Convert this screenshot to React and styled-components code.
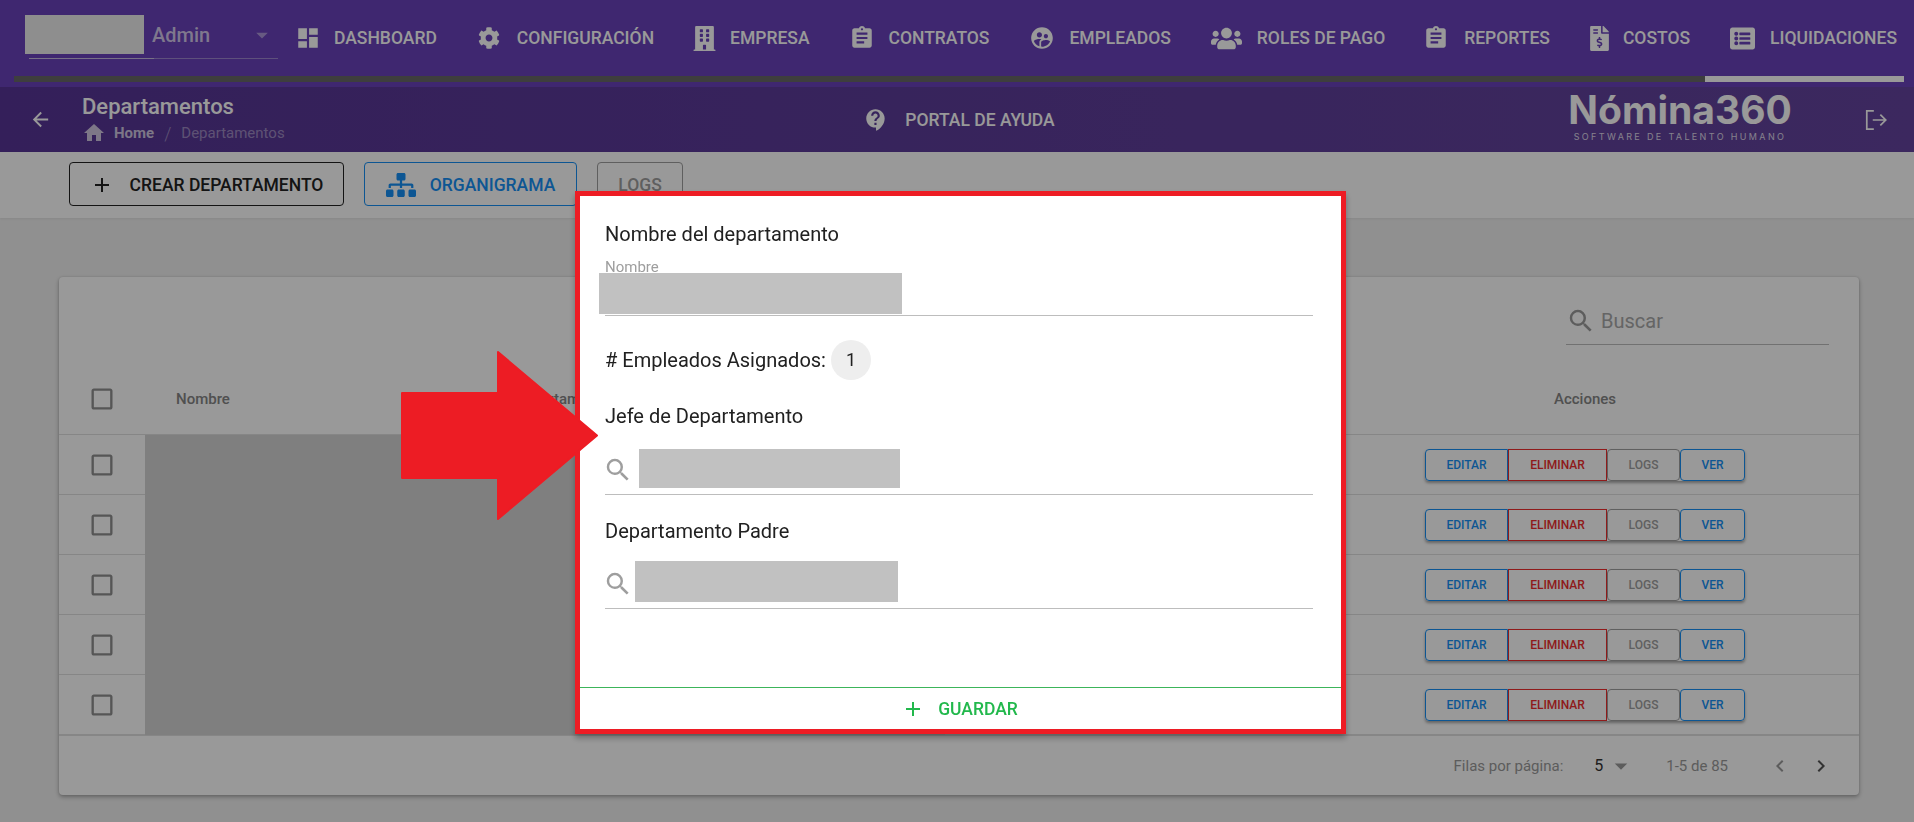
import React from 'react';
import styled, { createGlobalStyle } from 'styled-components';
import {
  MdDashboard, MdSupervisedUserCircle, MdContactSupport, MdHome, MdArrowBack, MdAdd, MdAssignment,
  MdSearch, MdCheckBoxOutlineBlank, MdChevronLeft, MdChevronRight, MdArrowDropDown,
} from 'react-icons/md';
import { FaCog, FaBuilding, FaUsers, FaFileInvoiceDollar, FaListAlt, FaSitemap } from 'react-icons/fa';

const GlobalStyle = createGlobalStyle`
  html, body { margin: 0; padding: 0; height: 100%; overflow: hidden; }
  body { background: #f0f0f0; font-family: Roboto, "Liberation Sans", sans-serif; }
  * { box-sizing: border-box; }
`;

const Page = styled.div`
  width: 1914px;
  height: 822px;
`;

const TopBar = styled.div`
  height: 87px;
  background: #6941bb;
  padding-top: 15px;
`;
const TopRow = styled.div`
  display: flex;
  height: 61px;
  padding-left: 25px;
`;
const UserBox = styled.div`
  flex: none;
  width: 253px;
  margin-right: 17px;
`;
const UserSelect = styled.div`
  display: flex;
  align-items: center;
  height: 39px;
  color: rgba(255, 255, 255, 0.72);
  font-size: 20px;
  font-weight: 500;
`;
const Avatar = styled.div`
  width: 119px;
  height: 39px;
  background: #ededed;
  margin-right: 8px;
`;
const Caret = styled(MdArrowDropDown)`
  margin-left: auto;
  margin-right: 2px;
  font-size: 28px;
  color: rgba(255, 255, 255, 0.45);
`;
const UserLine = styled.div`
  height: 1px;
  margin: 4px 0 0 4px;
  background: linear-gradient(90deg, #c9bddf 50%, #9d86cf 50%);
`;
const NavItem = styled.div`
  display: flex;
  align-items: center;
  flex: none;
  height: 46px;
  margin-right: ${p => p.$gap}px;
  color: #fff;
  font-size: 17.5px;
  font-weight: 500;
  white-space: nowrap;
  svg { font-size: ${p => p.$size}px; margin-right: ${p => p.$iconGap}px; }
`;
const ScrollTrack = styled.div`
  display: flex;
  justify-content: flex-end;
  height: 6px;
  margin: 0 10px 0 14px;
  background: #686868;
`;
const ScrollThumb = styled.div`
  width: 199px;
  background: #fff;
`;

const SubBar = styled.div`
  display: grid;
  grid-template-columns: 1fr auto 1fr;
  align-items: center;
  height: 65px;
  padding: 0 25px 0 29px;
  color: #fff;
  background: linear-gradient(90deg, #573596, #64449e);
`;
const SubLeft = styled.div`
  display: flex;
  align-items: center;
  gap: 30px;
  > svg { font-size: 23px; }
`;
const Title = styled.div`
  font-size: 22px;
  font-weight: 500;
  line-height: 26px;
`;
const Crumbs = styled.div`
  display: flex;
  align-items: center;
  margin-top: 1px;
  font-size: 15px;
  color: rgba(255, 255, 255, 0.42);
  svg { font-size: 24px; margin-right: 8px; color: rgba(255, 255, 255, 0.72); }
  b { color: rgba(255, 255, 255, 0.72); }
  span { margin: 0 10px; font-size: 18px; font-weight: 300; }
`;
const Portal = styled.div`
  display: flex;
  align-items: center;
  gap: 16px;
  font-size: 17.5px;
  font-weight: 500;
  svg { font-size: 26px; }
`;
const SubRight = styled.div`
  display: flex;
  align-items: center;
  justify-content: flex-end;
  gap: 71px;
`;
const Logo = styled.div`
  width: 224px;
  margin-bottom: 8px;
  text-align: center;
`;
const LogoName = styled.div`
  font-family: Inter, "Open Sans", sans-serif;
  font-size: 39px;
  font-weight: 700;
  line-height: 42px;
  white-space: nowrap;
`;
const LogoSub = styled.div`
  font-family: Inter, "Open Sans", sans-serif;
  font-size: 9px;
  line-height: 12px;
  letter-spacing: 2.35px;
  color: rgba(255, 255, 255, 0.8);
  white-space: nowrap;
`;

const Toolbar = styled.div`
  display: flex;
  gap: 20px;
  height: 66px;
  padding: 10px 0 0 69px;
  background: #fff;
  box-shadow: 0 1px 2px rgba(0, 0, 0, 0.06);
`;
const ToolButton = styled.div`
  display: flex;
  align-items: center;
  justify-content: center;
  gap: ${p => p.$gap || 0}px;
  width: ${p => p.$w}px;
  height: 44px;
  padding-top: 1px;
  border: 1px solid ${p => p.$color};
  border-radius: 4px;
  color: ${p => p.$color};
  font-size: 17.5px;
  font-weight: 500;
  svg { font-size: ${p => p.$icon || 24}px; }
`;

const Card = styled.div`
  width: 1800px;
  height: 518px;
  margin: 59px 0 0 59px;
  background: #fff;
  border-radius: 4px;
  box-shadow: 0 2px 4px rgba(0, 0, 0, 0.3), 0 0 2px rgba(0, 0, 0, 0.12);
  overflow: hidden;
`;
const CardTop = styled.div`
  display: flex;
  justify-content: flex-end;
  height: 87px;
  padding: 25px 30px 0 0;
`;
const SearchBox = styled.div`
  display: flex;
  align-items: center;
  width: 263px;
  height: 43px;
  padding-bottom: 5px;
  border-bottom: 1px solid #bdbdbd;
  color: #a8a8a8;
  font-size: 20px;
  svg { font-size: 30px; margin-right: 5px; color: #9b9b9b; }
`;
const HeadRow = styled.div`
  display: grid;
  grid-template-columns: 86px 369px 1fr 548px;
  align-items: center;
  height: 71px;
  border-bottom: 1px solid #e0e0e0;
  color: #858585;
  font-size: 15px;
  font-weight: 500;
`;
const CheckCell = styled.div`
  display: flex;
  justify-content: center;
  svg { font-size: 28px; color: #8f8f8f; }
`;
const HeadText = styled.div`
  text-align: ${p => p.$align || 'left'};
  padding-left: ${p => p.$pad || 0}px;
`;
const Row = styled.div`
  display: grid;
  grid-template-columns: 86px 800px 1fr 548px;
  align-items: center;
  height: 60px;
  border-bottom: 1px solid #e0e0e0;
`;
const Hidden = styled.div`
  align-self: stretch;
  margin-bottom: -1px;
  background: #d4d4d4;
`;
const Actions = styled.div`
  grid-column: 4;
  display: flex;
  justify-content: center;
`;
const ActionGroup = styled.div`
  display: flex;
  border-radius: 4px;
  box-shadow: 0 2px 3px rgba(0, 0, 0, 0.35);
`;
const ActionButton = styled.div`
  display: flex;
  align-items: center;
  justify-content: center;
  width: ${p => p.$w}px;
  height: 32px;
  border: 1px solid ${p => p.$color};
  border-radius: ${p => p.$radius};
  color: ${p => p.$color};
  font-size: 12px;
  font-weight: 500;
`;
const Footer = styled.div`
  display: flex;
  align-items: center;
  justify-content: flex-end;
  height: 60px;
  padding-right: 26px;
  border-top: 1px solid #e0e0e0;
  color: #9a9a9a;
  font-size: 15px;
`;
const PageSize = styled.div`
  display: flex;
  align-items: center;
  margin: 0 30px 0 31px;
  color: #333;
  font-size: 16px;
  svg { font-size: 30px; margin-left: 3px; color: #9a9a9a; }
`;
const Pager = styled.div`
  display: flex;
  gap: 17px;
  margin-left: 40px;
  svg { font-size: 24px; color: ${p => p.$color}; }
`;
const PagerNext = styled(MdChevronRight)`
  && { color: #555; }
`;

const Backdrop = styled.div`
  position: fixed;
  inset: 0;
  background: rgba(0, 0, 0, 0.4);
`;
const Modal = styled.div`
  position: fixed;
  left: 575px;
  top: 191px;
  display: flex;
  flex-direction: column;
  width: 771px;
  height: 543px;
  border: 5px solid #ed1c24;
  background: #fff;
  box-shadow: 0 4px 6px rgba(0, 0, 0, 0.3);
`;
const Form = styled.div`
  flex: 1;
  padding: 26px 28px 0 25px;
`;
const FieldTitle = styled.div`
  display: flex;
  align-items: center;
  margin-top: ${p => p.$top || 0}px;
  color: #212121;
  font-size: 20px;
  line-height: 24px;
`;
const NameField = styled.div`
  position: relative;
  height: 58px;
  margin-top: 12px;
  padding-top: 15px;
  border-bottom: 1px solid #bdbdbd;
`;
const FloatLabel = styled.div`
  position: absolute;
  top: 0;
  left: 0;
  color: #9e9e9e;
  font-size: 15px;
  line-height: 18px;
`;
const Block = styled.div`
  width: ${p => p.$w}px;
  height: ${p => p.$h}px;
  margin-left: ${p => p.$left}px;
  background: #c1c1c1;
`;
const SearchField = styled.div`
  display: flex;
  align-items: flex-end;
  margin-top: ${p => p.$top}px;
  padding-bottom: 6px;
  border-bottom: 1px solid #bdbdbd;
  svg { flex: none; font-size: 30px; margin: 0 0 3px -2px; color: #9e9e9e; }
`;
const Badge = styled.div`
  display: flex;
  align-items: center;
  justify-content: center;
  width: 40px;
  height: 40px;
  margin-left: 5px;
  border-radius: 50%;
  background: #eee;
  font-size: 18px;
`;
const SaveBar = styled.div`
  display: flex;
  align-items: center;
  justify-content: center;
  gap: 13px;
  height: 42px;
  padding: 1px 2px 0 0;
  border-top: 1px solid #3cb55a;
  color: #22b84c;
  font-size: 17.5px;
  font-weight: 500;
  svg { font-size: 24px; }
`;
const Arrow = styled.svg`
  position: fixed;
  left: 401px;
  top: 351px;
`;

const LogoutIcon = () => (
  <svg width="26" height="26" viewBox="0 0 24 24" fill="none" stroke="currentColor" strokeWidth="1.6">
    <path d="M10 3.500H3.500v17H10M9 12h12M16 7l5 5-5 5" />
  </svg>
);

const navItems = [
  { label: 'DASHBOARD', Icon: MdDashboard, gap: 41, size: 26, iconGap: 13 },
  { label: 'CONFIGURACIÓN', Icon: FaCog, gap: 38, size: 22, iconGap: 17 },
  { label: 'EMPRESA', Icon: FaBuilding, gap: 39, size: 25, iconGap: 13 },
  { label: 'CONTRATOS', Icon: MdAssignment, gap: 40, size: 26, iconGap: 14 },
  { label: 'EMPLEADOS', Icon: MdSupervisedUserCircle, gap: 40, size: 26, iconGap: 14 },
  { label: 'ROLES DE PAGO', Icon: FaUsers, gap: 38, size: 31, iconGap: 15 },
  { label: 'REPORTES', Icon: MdAssignment, gap: 37, size: 26, iconGap: 15 },
  { label: 'COSTOS', Icon: FaFileInvoiceDollar, gap: 40, size: 25, iconGap: 11 },
  { label: 'LIQUIDACIONES', Icon: FaListAlt, gap: 0, size: 25, iconGap: 15 },
];

const actions = [
  { label: 'EDITAR', w: 83, color: '#1690f5', radius: '4px 0 0 4px' },
  { label: 'ELIMINAR', w: 99, color: '#ee2e2e', radius: '0' },
  { label: 'LOGS', w: 73, color: '#a0a0a0', radius: '4px' },
  { label: 'VER', w: 65, color: '#1690f5', radius: '4px' },
];

const App = () => {
  return (
    <Page>
      <GlobalStyle />
      <TopBar>
        <TopRow>
          <UserBox>
            <UserSelect>
              <Avatar />
              Admin
              <Caret />
            </UserSelect>
            <UserLine />
          </UserBox>
          {navItems.map(({ label, Icon, gap, size, iconGap }) => (
            <NavItem key={label} $gap={gap} $size={size} $iconGap={iconGap}>
              <Icon />
              {label}
            </NavItem>
          ))}
        </TopRow>
        <ScrollTrack>
          <ScrollThumb />
        </ScrollTrack>
      </TopBar>

      <SubBar>
        <SubLeft>
          <MdArrowBack />
          <div>
            <Title>Departamentos</Title>
            <Crumbs>
              <MdHome />
              <b>Home</b>
              <span>/</span>
              Departamentos
            </Crumbs>
          </div>
        </SubLeft>
        <Portal>
          <MdContactSupport />
          PORTAL DE AYUDA
        </Portal>
        <SubRight>
          <Logo>
            <LogoName>Nómina360</LogoName>
            <LogoSub>SOFTWARE DE TALENTO HUMANO</LogoSub>
          </Logo>
          <LogoutIcon />
        </SubRight>
      </SubBar>

      <Toolbar>
        <ToolButton $w={275} $color="#222" $gap={16}><MdAdd />CREAR DEPARTAMENTO</ToolButton>
        <ToolButton $w={213} $color="#1690f5" $gap={14} $icon={30}><FaSitemap />ORGANIGRAMA</ToolButton>
        <ToolButton $w={86} $color="#9e9e9e">LOGS</ToolButton>
      </Toolbar>

      <Card>
        <CardTop>
          <SearchBox><MdSearch />Buscar</SearchBox>
        </CardTop>
        <HeadRow>
          <CheckCell><MdCheckBoxOutlineBlank /></CheckCell>
          <HeadText $pad={31}>Nombre</HeadText>
          <HeadText>Departamento Padre</HeadText>
          <HeadText $align="center">Acciones</HeadText>
        </HeadRow>
        {[0, 1, 2, 3, 4].map(i => (
          <Row key={i}>
            <CheckCell><MdCheckBoxOutlineBlank /></CheckCell>
            <Hidden />
            <Actions>
              <ActionGroup>
                {actions.map(a => (
                  <ActionButton key={a.label} $w={a.w} $color={a.color} $radius={a.radius}>{a.label}</ActionButton>
                ))}
              </ActionGroup>
            </Actions>
          </Row>
        ))}
        <Footer>
          Filas por página:
          <PageSize>5<MdArrowDropDown /></PageSize>
          1-5 de 85
          <Pager $color="#9a9a9a">
            <MdChevronLeft />
            <PagerNext />
          </Pager>
        </Footer>
      </Card>

      <Backdrop />

      <Modal>
        <Form>
          <FieldTitle>Nombre del departamento</FieldTitle>
          <NameField>
            <FloatLabel>Nombre</FloatLabel>
            <Block $w={303} $h={41} $left={-6} />
          </NameField>
          <FieldTitle $top={24}># Empleados Asignados: <Badge>1</Badge></FieldTitle>
          <FieldTitle $top={24}>Jefe de Departamento</FieldTitle>
          <SearchField $top={21}>
            <MdSearch />
            <Block $w={261} $h={39} $left={6} />
          </SearchField>
          <FieldTitle $top={24}>Departamento Padre</FieldTitle>
          <SearchField $top={18}>
            <MdSearch />
            <Block $w={263} $h={41} $left={2} />
          </SearchField>
        </Form>
        <SaveBar><MdAdd />GUARDAR</SaveBar>
      </Modal>

      <Arrow width="197" height="169" viewBox="0 0 197 169">
        <path d="M1 42h96V1l99 83.500-99 83.500v-41H1z" fill="#ed1c24" stroke="#ed1c24" strokeWidth="2" strokeLinejoin="round" />
      </Arrow>
    </Page>
  );
};

export default App;
